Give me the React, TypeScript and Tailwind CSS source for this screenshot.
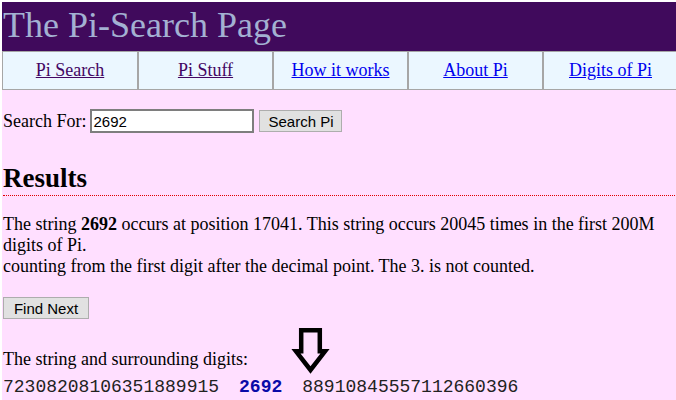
import React from 'react';

const serif = { fontFamily: '"Liberation Serif", "Times New Roman", serif' };
const sans = { fontFamily: '"Liberation Sans", Arial, sans-serif' };

const navItems = [
  { label: 'Pi Search', visited: true },
  { label: 'Pi Stuff', visited: true },
  { label: 'How it works', visited: false },
  { label: 'About Pi', visited: false },
  { label: 'Digits of Pi', visited: false },
];

// hollow down arrow pointing at the match
const DownArrow: React.FC = () => (
  <svg width="40" height="46" viewBox="0 0 40 46" className="block">
    <path
      d="M10.2 2.3 H28.8 V23.3 H34 L19.5 42 L5 23.3 H10.2 Z"
      fill="none"
      stroke="#000"
      strokeWidth="4.5"
      strokeLinejoin="miter"
    />
  </svg>
);

const App: React.FC = () => {
  return (
    <div className="w-[676px] h-[400px] overflow-hidden bg-white pt-[2px] pl-[2px]" style={serif}>
      <div className="w-[700px] min-h-[398px] bg-[#ffdfff]">
        {/* title bar */}
        <div className="h-[49px] bg-[#400a5c] pt-[3px] pl-[1px]">
          <h1 className="text-[36px] leading-[40px] font-normal text-[#a3b1d2]">The Pi-Search Page</h1>
        </div>

        {/* nav table */}
        <div className="flex h-[39px] border-y border-[#a6a6a6] bg-[#ebf7ff] text-[18px]">
          {navItems.map((item, i) => (
            <div
              key={item.label}
              className={
                'flex items-center justify-center ' +
                (i === 0 ? 'w-[135px] border-l border-[#a6a6a6]' : 'w-[135px] border-l-2 border-[#a6a6a6]')
              }
            >
              <a href="#" className={'underline ' + (item.visited ? 'text-[#430663]' : 'text-[#0000ee]')}>
                {item.label}
              </a>
            </div>
          ))}
          <div className="flex-1 border-l-2 border-[#a6a6a6]" />
        </div>

        <div className="pl-[1px] text-[18px] leading-[20px] text-black">
          {/* search form */}
          <form className="flex items-center pt-[19px]" onSubmit={(e) => e.preventDefault()}>
            <span>Search For:</span>
            <input
              type="text"
              defaultValue="2692"
              className="ml-[4px] h-[24px] w-[164px] border-2 border-[#7e7e7e] bg-white px-[1px] text-[15px] outline-none"
              style={sans}
            />
            <button
              type="submit"
              className="ml-[5px] h-[22px] w-[83px] border border-[#adadad] bg-[#e1e1e1] text-[15px] leading-none"
              style={sans}
            >
              Search Pi
            </button>
          </form>

          {/* results */}
          <h2 className="mt-[30px] w-[674px] border-b border-dotted border-[#e00000] pb-[2px] text-[27px] font-bold leading-[30px]">
            Results
          </h2>

          <p className="mt-[18px] w-[670px] leading-[21px]">
            The string <b>2692</b> occurs at position 17041. This string occurs 20045 times in the first 200M digits
            of Pi.
            <br />
            counting from the first digit after the decimal point. The 3. is not counted.
          </p>

          <button
            type="button"
            className="mt-[20px] block h-[22px] w-[86px] border border-[#adadad] bg-[#e1e1e1] text-[15px] leading-none"
            style={sans}
          >
            Find Next
          </button>

          <div className="mt-[9px] flex items-end">
            <span className="mb-[5px]">The string and surrounding digits:</span>
            <div className="ml-[43px]">
              <DownArrow />
            </div>
          </div>

          <div
            className="mt-[3px] flex whitespace-pre text-[18px] leading-[20px] text-[#222]"
            style={{ fontFamily: '"Liberation Mono", "Courier New", monospace' }}
          >
            <span>72308208106351889915</span>
            <b className="ml-[20px] text-[#0a0aa8]">2692</b>
            <span className="ml-[20px]">88910845557112660396</span>
          </div>
        </div>
      </div>
    </div>
  );
};

export default App;
